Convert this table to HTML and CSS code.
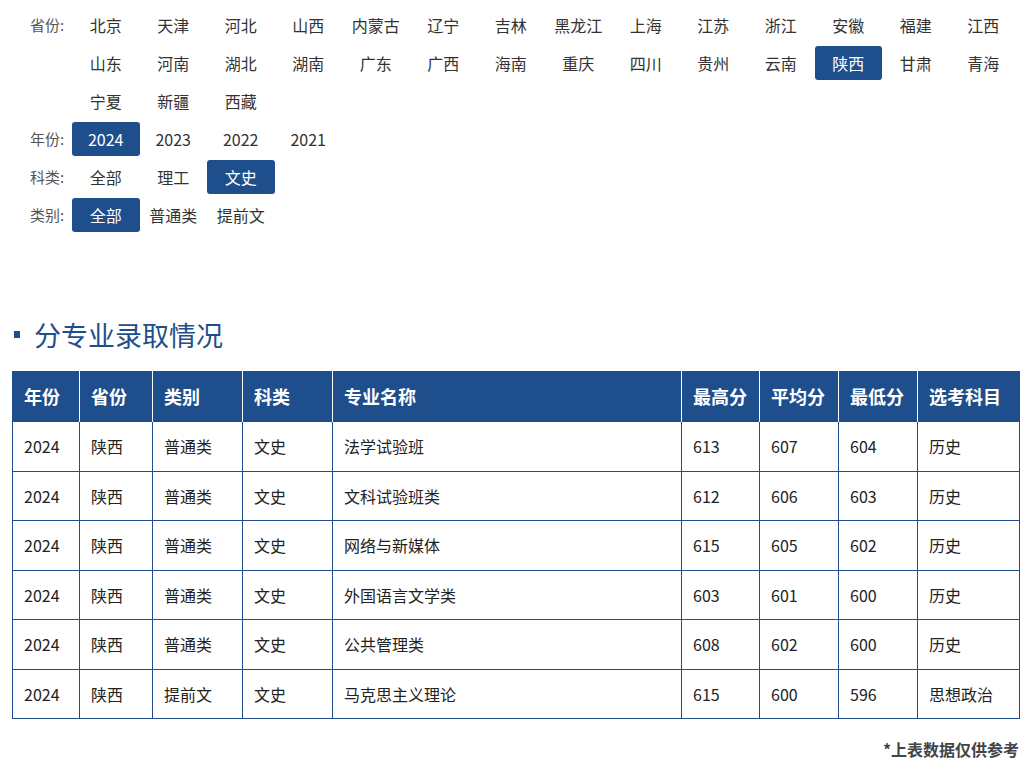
FILE: index.html
```html
<!DOCTYPE html>
<html lang="zh">
<head>
<meta charset="utf-8">
<link rel="stylesheet" href="styles.css">
</head>
<body>
<div class="filters">
  <div class="frow">
    <div class="flabel">省份:</div>
    <div class="fitems">
      <span class="fi">北京</span><span class="fi">天津</span><span class="fi">河北</span><span class="fi">山西</span><span class="fi">内蒙古</span><span class="fi">辽宁</span><span class="fi">吉林</span><span class="fi">黑龙江</span><span class="fi">上海</span><span class="fi">江苏</span><span class="fi">浙江</span><span class="fi">安徽</span><span class="fi">福建</span><span class="fi">江西</span>
      <span class="fi">山东</span><span class="fi">河南</span><span class="fi">湖北</span><span class="fi">湖南</span><span class="fi">广东</span><span class="fi">广西</span><span class="fi">海南</span><span class="fi">重庆</span><span class="fi">四川</span><span class="fi">贵州</span><span class="fi">云南</span><span class="fi active">陕西</span><span class="fi">甘肃</span><span class="fi">青海</span>
      <span class="fi">宁夏</span><span class="fi">新疆</span><span class="fi">西藏</span>
    </div>
  </div>
  <div class="frow">
    <div class="flabel">年份:</div>
    <div class="fitems">
      <span class="fi active">2024</span><span class="fi">2023</span><span class="fi">2022</span><span class="fi">2021</span>
    </div>
  </div>
  <div class="frow">
    <div class="flabel">科类:</div>
    <div class="fitems">
      <span class="fi">全部</span><span class="fi">理工</span><span class="fi active">文史</span>
    </div>
  </div>
  <div class="frow">
    <div class="flabel">类别:</div>
    <div class="fitems">
      <span class="fi active">全部</span><span class="fi">普通类</span><span class="fi">提前文</span>
    </div>
  </div>
</div>

<h2 class="title"><span class="sq"></span>分专业录取情况</h2>

<table class="tbl">
  <colgroup>
    <col class="c1"><col class="c2"><col class="c3"><col class="c4"><col class="c5"><col class="c6"><col class="c7"><col class="c8"><col class="c9">
  </colgroup>
  <thead>
    <tr><th>年份</th><th>省份</th><th>类别</th><th>科类</th><th>专业名称</th><th>最高分</th><th>平均分</th><th>最低分</th><th>选考科目</th></tr>
  </thead>
  <tbody>
    <tr><td>2024</td><td>陕西</td><td>普通类</td><td>文史</td><td>法学试验班</td><td>613</td><td>607</td><td>604</td><td>历史</td></tr>
    <tr><td>2024</td><td>陕西</td><td>普通类</td><td>文史</td><td>文科试验班类</td><td>612</td><td>606</td><td>603</td><td>历史</td></tr>
    <tr><td>2024</td><td>陕西</td><td>普通类</td><td>文史</td><td>网络与新媒体</td><td>615</td><td>605</td><td>602</td><td>历史</td></tr>
    <tr><td>2024</td><td>陕西</td><td>普通类</td><td>文史</td><td>外国语言文学类</td><td>603</td><td>601</td><td>600</td><td>历史</td></tr>
    <tr><td>2024</td><td>陕西</td><td>普通类</td><td>文史</td><td>公共管理类</td><td>608</td><td>602</td><td>600</td><td>历史</td></tr>
    <tr><td>2024</td><td>陕西</td><td>提前文</td><td>文史</td><td>马克思主义理论</td><td>615</td><td>600</td><td>596</td><td>思想政治</td></tr>
  </tbody>
</table>

<p class="note">*上表数据仅供参考</p>
</body>
</html>
```

FILE: styles.css
```css
html, body {
  margin: 0;
  padding: 0;
  background: #fff;
}
body {
  font-family: "Noto Sans CJK SC", "Noto Sans", sans-serif;
  color: #333;
}
.filters {
  padding: 6px 0 0 30px;
}
.frow {
  display: flex;
  align-items: flex-start;
}
.flabel {
  width: 42px;
  flex: none;
  font-size: 15px;
  line-height: 38px;
  color: #555;
}
.fitems {
  display: flex;
  flex-wrap: wrap;
  width: 945px;
}
.fi {
  box-sizing: border-box;
  width: 67.5px;
  height: 34px;
  margin: 2px 0;
  line-height: 34px;
  text-align: center;
  font-size: 16px;
  color: #333;
  border-radius: 3px;
}
.fi.active {
  background: #1f4e8c;
  color: #fff;
}
.title {
  margin: 82px 0 0 14px;
  height: 36px;
  display: flex;
  align-items: center;
  font-size: 27px;
  font-weight: normal;
  color: #1f4e8c;
}
.sq {
  width: 6px;
  height: 7px;
  background: #1f4e8c;
  margin-right: 14px;
}
.tbl {
  margin: 19px 0 0 12px;
  width: 1007px;
  border-collapse: collapse;
  table-layout: fixed;
}
.c1 { width: 67px; }
.c2 { width: 73px; }
.c3 { width: 90px; }
.c4 { width: 90px; }
.c5 { width: 349px; }
.c6 { width: 78px; }
.c7 { width: 79px; }
.c8 { width: 79px; }
.c9 { width: 102px; }
.tbl th {
  background: #1f4e8c;
  color: #fff;
  font-size: 18px;
  font-weight: bold;
  text-align: left;
  padding: 0 11px;
  height: 50px;
  border-left: 1px solid #fff;
  border-right: 1px solid #fff;
}
.tbl th:first-child { border-left: 1px solid #1f4e8c; }
.tbl th:last-child { border-right: 1px solid #1f4e8c; }
.tbl td {
  border: 1px solid #1f4e8c;
  font-size: 16px;
  color: #222;
  padding: 0 11px;
  height: 48.5px;
}
.note {
  margin: 18px 13px 0 0;
  text-align: right;
  font-size: 16px;
  font-weight: bold;
  color: #444;
}
```
